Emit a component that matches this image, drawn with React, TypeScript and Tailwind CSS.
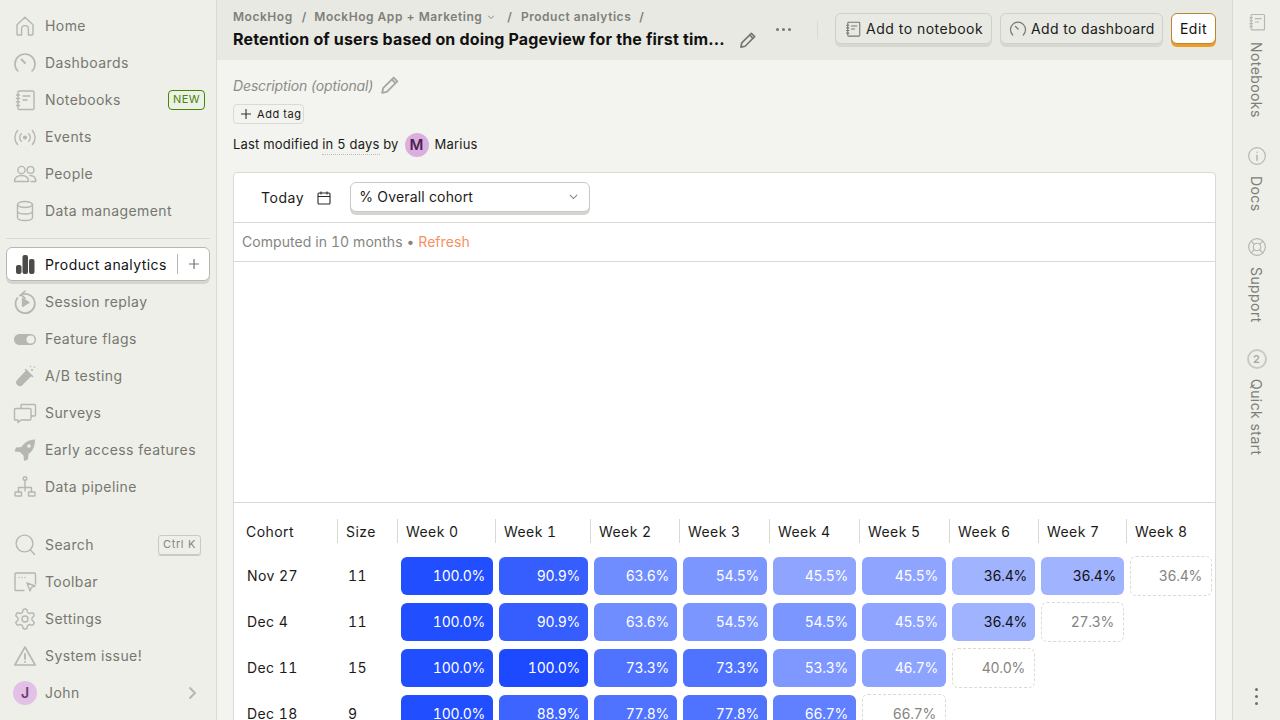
import React from "react";

type IconProps = { className?: string };
const S = ({ children, className = "w-6 h-6 text-[#b6b7b0]" }: { children: React.ReactNode; className?: string }) => (
  <svg viewBox="0 0 24 24" fill="none" stroke="currentColor" strokeWidth={1.4} strokeLinecap="round" strokeLinejoin="round" className={className}>
    {children}
  </svg>
);

const HomeI = (p: IconProps) => <S {...p}><path d="M4 10.8 12 3.200l8 7.600v9.200a1 1 0 0 1-1 1h-3.600v-6a3.400 3.400 0 0 0-6.800 0v6H5a1 1 0 0 1-1-1z" /></S>;
const GaugeI = (p: IconProps) => <S {...p}><path d="M4.900 20a10 10 0 1 1 14.200 0" strokeWidth={1.6} /><path d="M8.500 8.500l3.500 3.500" strokeWidth={1.8} /></S>;
const NotebookI = (p: IconProps) => <S {...p}><rect x="5" y="3" width="16" height="18.500" rx="1.200" /><path d="M10 8h7M10 12h4M3.500 7h3M3.500 10.500h3M3.500 14h3M3.500 17.500h3" /></S>;
const EventsI = (p: IconProps) => <S {...p}><circle cx="12" cy="12.500" r="1.400" fill="currentColor" /><path d="M8.300 8.800a5.200 5.200 0 0 0 0 7.400M15.700 8.800a5.200 5.200 0 0 1 0 7.400M4.600 5.500a10.500 10.500 0 0 0 0 14M19.400 5.500a10.500 10.500 0 0 1 0 14" /></S>;
const PeopleI = (p: IconProps) => <S {...p}><circle cx="8.500" cy="8" r="3.600" /><circle cx="17.500" cy="8" r="3.400" /><path d="M1.500 19.500c0-4.200 2.800-6 7-6s7 1.800 7 6zM17 13.500c3.600 0 5.800 2 5.800 6H18" /></S>;
const DbI = (p: IconProps) => <S {...p}><ellipse cx="12" cy="5.500" rx="7.500" ry="3" /><path d="M4.500 5.500v13c0 1.700 3.400 3 7.500 3s7.500-1.300 7.500-3v-13M4.500 12c0 1.700 3.400 3 7.500 3s7.500-1.300 7.500-3" /></S>;
const BarsI = () => (
  <svg viewBox="0 0 24 24" className="w-6 h-6 text-[#4b4b47]" fill="currentColor">
    <rect x="3" y="13" width="5.500" height="9" rx="2" /><rect x="9.500" y="3" width="5.500" height="19" rx="2" /><rect x="16" y="7" width="5.500" height="15" rx="2" />
  </svg>
);
const ReplayI = (p: IconProps) => <S {...p}><path d="M7 5.500a9.600 9.600 0 1 1-2.700 2.600" strokeWidth={1.8} /><path d="M12 1 8 4.800l4 3.400" strokeWidth={1.600} /><path d="M9.600 8.600v7.800l6.400-3.900z" fill="currentColor" /></S>;
const ToggleI = () => (
  <svg viewBox="0 0 24 24" className="w-6 h-6 text-[#b6b7b0]"><rect x="1" y="7" width="22" height="11" rx="5.500" fill="currentColor" /><circle cx="17.500" cy="12.500" r="4" fill="#eeefe9" /></svg>
);
const TubeI = () => (
  <svg viewBox="0 0 24 24" className="w-6 h-6 text-[#b6b7b0]" fill="currentColor">
    <path d="M13.500 6 19 11.500 9.500 21a3.600 3.600 0 0 1-5.200-5.200z" /><path d="M12.500 5.500l7 7" stroke="currentColor" strokeWidth="1.600" strokeLinecap="round" /><circle cx="19" cy="6" r="1.100" /><circle cx="17.500" cy="2.500" r=".8" /><circle cx="21.500" cy="3" r=".8" />
  </svg>
);
const SurveyI = (p: IconProps) => <S {...p}><path d="M8 7.500v-3a1 1 0 0 1 1-1h12.500a1 1 0 0 1 1 1V14a1 1 0 0 1-1 1H18" /><path d="M2.500 7.500H17a1 1 0 0 1 1 1V18a1 1 0 0 1-1 1H8l-3 2.500V19H2.500a1 1 0 0 1-1-1V8.500a1 1 0 0 1 1-1z" /></S>;
const RocketI = () => (
  <svg viewBox="0 0 24 24" className="w-6 h-6 text-[#b6b7b0]" fill="currentColor">
    <path d="M22 1.500c-6.500.4-10.500 2.800-13.500 7.500L3 9.500 1.500 13.500 7 14l3.500 3.500.5 5.500 4-1.500.5-5.500C20 13 22 8.500 22 1.500z" />
    <circle cx="16" cy="8" r="1.800" fill="#eeefe9" />
  </svg>
);
const PipelineI = (p: IconProps) => <S {...p}><circle cx="12" cy="3.500" r="1.800" /><path d="M12 5.500V16M5.500 17v-4.500h13V17" /><rect x="2" y="17" width="6.500" height="4" rx=".6" /><rect x="15.500" y="17" width="6.500" height="4" rx=".6" /></S>;
const SearchI = (p: IconProps) => <S {...p}><circle cx="11.500" cy="10.500" r="8.400" /><path d="m17.500 17 4 4.500" /></S>;
const ToolbarI = (p: IconProps) => <S {...p}><path d="M11 20.500H3a1 1 0 0 1-1-1V4a1 1 0 0 1 1-1h18.500a1 1 0 0 1 1 1v10" /><path d="M6 7.500h.01M9 7.500h.01M12 7.500h.01" /><path d="M14 13l8 3-3.500 1.300-1.500 3.700z" /></S>;
const GearI = (p: IconProps) => (
  <S {...p}><path d="M12.220 2h-.44a2 2 0 0 0-2 2v.18a2 2 0 0 1-1 1.730l-.43.25a2 2 0 0 1-2 0l-.15-.08a2 2 0 0 0-2.730.73l-.22.38a2 2 0 0 0 .73 2.730l.15.100a2 2 0 0 1 1 1.720v.510a2 2 0 0 1-1 1.740l-.15.090a2 2 0 0 0-.73 2.730l.22.380a2 2 0 0 0 2.730.730l.15-.080a2 2 0 0 1 2 0l.43.250a2 2 0 0 1 1 1.730V20a2 2 0 0 0 2 2h.44a2 2 0 0 0 2-2v-.180a2 2 0 0 1 1-1.730l.43-.250a2 2 0 0 1 2 0l.15.080a2 2 0 0 0 2.730-.730l.22-.390a2 2 0 0 0-.73-2.730l-.15-.080a2 2 0 0 1-1-1.740v-.500a2 2 0 0 1 1-1.740l.15-.090a2 2 0 0 0 .73-2.730l-.22-.380a2 2 0 0 0-2.730-.730l-.15.080a2 2 0 0 1-2 0l-.43-.250a2 2 0 0 1-1-1.730V4a2 2 0 0 0-2-2z" /><circle cx="12" cy="12" r="3" /></S>
);
const WarnI = (p: IconProps) => <S {...p}><path d="M12 3 1.800 21h20.400z" strokeWidth={1.6} /><path d="M12 10v5M12 17.800v.2" strokeWidth={1.8} /></S>;
const Pencil = ({ className }: IconProps) => (
  <svg viewBox="0 0 24 24" fill="none" stroke="currentColor" strokeWidth={2} strokeLinejoin="round" className={className}>
    <path d="M3.500 20.500l1-5L16 4l4 4L8.500 19.500z" /><path d="M14 6l4 4" />
  </svg>
);
const CalendarI = () => (
  <svg viewBox="0 0 16 16" fill="none" stroke="#2a2a28" strokeWidth={1.1} className="w-4 h-4">
    <rect x="2" y="3" width="12" height="11" rx="1" /><path d="M2 6.500h12M5 1.500v3M11 1.500v3" />
  </svg>
);

const Nav = ({ icon, label, right }: { icon: React.ReactNode; label: string; right?: React.ReactNode }) => (
  <div className="flex items-center h-[37px] pl-[7px] pr-[5px]">
    <span className="w-6 h-6 shrink-0">{icon}</span>
    <span className="ml-2 flex-1 text-[14px] font-normal text-[#767771] tracking-[0.03em] whitespace-nowrap">{label}</span>
    {right}
  </div>
);

const Sidebar = () => (
  <aside className="w-[217px] shrink-0 h-full bg-[#eeefe9] border-r border-[#d9dad3] px-[6px] pt-[7px] flex flex-col">
    <Nav icon={<HomeI />} label="Home" />
    <Nav icon={<GaugeI />} label="Dashboards" />
    <Nav icon={<NotebookI />} label="Notebooks" right={
      <span className="h-5 px-1 flex items-center rounded-[4px] border border-[#3f8a00] text-[#3f8a00] text-[11px] font-normal tracking-[0.04em]">NEW</span>
    } />
    <Nav icon={<EventsI />} label="Events" />
    <Nav icon={<PeopleI />} label="People" />
    <Nav icon={<DbI />} label="Data management" />
    <div className="h-px bg-[#d9dad3] mt-[9px] mb-[7px]" />
    <div className="h-[37px] shrink-0">
      <div className="h-[34px] mt-px bg-white rounded-[6px] border border-[#b7b8b1] shadow-[0_3px_0_#d4d5ce] flex items-center pl-[6px]">
        <BarsI />
        <span className="ml-2 text-[14px] font-normal text-[#111] tracking-[0.03em] whitespace-nowrap">Product analytics</span>
        <span className="ml-[10px] h-5 w-px bg-[#b7b8b1]" />
        <svg viewBox="0 0 16 16" className="w-4 h-4 ml-2 text-[#77776f]" stroke="currentColor" strokeWidth="1.200"><path d="M8 3v10M3 8h10" /></svg>
      </div>
    </div>
    <Nav icon={<ReplayI />} label="Session replay" />
    <Nav icon={<ToggleI />} label="Feature flags" />
    <Nav icon={<TubeI />} label="A/B testing" />
    <Nav icon={<SurveyI />} label="Surveys" />
    <Nav icon={<RocketI />} label="Early access features" />
    <Nav icon={<PipelineI />} label="Data pipeline" />
    <div className="h-[21px] shrink-0" />
    <Nav icon={<SearchI />} label="Search" right={
      <span className="h-5 px-1 mr-[4px] flex items-center rounded-[3px] border border-[#c9cac3] shadow-[0_1px_0_#c9cac3] text-[#85867f] text-[11px] font-normal tracking-[0.06em]">Ctrl K</span>
    } />
    <Nav icon={<ToolbarI />} label="Toolbar" />
    <Nav icon={<GearI />} label="Settings" />
    <Nav icon={<WarnI />} label="System issue!" />
    <Nav icon={<span className="w-6 h-6 rounded-full bg-[#e3c0e6] flex items-center justify-center text-[#6b3a70] text-[14px] font-semibold">J</span>} label="John" right={
      <svg viewBox="0 0 16 16" fill="none" stroke="#b6b7b0" strokeWidth="2" className="w-4 h-4 mr-[5px]"><path d="M5.500 2.500 11 8l-5.500 5.500" /></svg>
    } />
  </aside>
);

const Crumb = ({ children, className = "" }: { children: React.ReactNode; className?: string }) => (
  <span className={`text-[12px] font-semibold text-[#7f7f79] tracking-[0.045em] whitespace-nowrap ${className}`}>{children}</span>
);
const Slash = ({ className = "" }: { className?: string }) => <span className={`text-[12px] font-semibold text-[#7f7f79] ${className}`}>/</span>;

const HeaderBtn = ({ icon, label, w, t }: { icon: React.ReactNode; label: string; w: string; t: string }) => (
  <div className={`h-[31px] pl-[8px] flex items-center gap-[4px] rounded-[6px] border border-[#cfd0c9] shadow-[0_3px_0_#d6d7d0] text-[14px] font-normal text-[#1b1b19] whitespace-nowrap ${w} ${t}`}>
    {icon}{label}
  </div>
);

const Header = () => (
  <header className="h-[60px] shrink-0 bg-[#e8e9e3] pl-4 pr-4 flex items-start">
    <div className="w-[492px] shrink-0 pt-[10px]">
      <div className="flex items-center h-[14px]">
        <Crumb>MockHog</Crumb><Slash className="ml-[9px]" />
        <Crumb className="ml-2">MockHog App + Marketing</Crumb>
        <svg viewBox="0 0 16 16" fill="none" stroke="#7f7f79" strokeWidth="1.500" className="w-[10px] h-[10px] ml-1"><path d="M3.500 6 8 10.500 12.500 6" /></svg>
        <Slash className="ml-[11px]" />
        <Crumb className="ml-[9px]">Product analytics</Crumb><Slash className="ml-[8px]" />
      </div>
      <div className="mt-[4px] text-[16px] leading-[22px] font-bold text-[#111110] tracking-[0.01em] whitespace-nowrap">Retention of users based on doing Pageview for the first tim...</div>
    </div>
    <Pencil className="w-5 h-5 mt-[30px] ml-[13px] text-[#77776f] shrink-0" />
    <div className="mt-[28px] ml-[18px] flex gap-[3px] shrink-0">
      <span className="w-[3px] h-[3px] rounded-full bg-[#77776f]" /><span className="w-[3px] h-[3px] rounded-full bg-[#77776f]" /><span className="w-[3px] h-[3px] rounded-full bg-[#77776f]" />
    </div>
    <div className="w-px h-[18px] bg-[#d9dad3] mt-[21px] ml-[26px] shrink-0" />
    <div className="ml-auto flex gap-2 mt-[13px] shrink-0">
      <HeaderBtn w="w-[157px]" t="tracking-[0.035em]" label="Add to notebook" icon={<NotebookI className="w-[18px] h-[18px] text-[#77776f]" />} />
      <HeaderBtn w="w-[163px]" t="tracking-[0.025em]" label="Add to dashboard" icon={<GaugeI className="w-[18px] h-[18px] text-[#77776f]" />} />
      <div className="h-[31px] w-[45px] justify-center flex items-center rounded-[6px] bg-white border border-[#b8862e] shadow-[0_3px_0_#eb9d2a] text-[14px] font-normal text-[#111] tracking-[0.04em]">Edit</div>
    </div>
  </header>
);

type Cell = { v: string; o?: number; dark?: boolean; dash?: boolean };
const c = (v: string, o: number, dark = false): Cell => ({ v, o, dark });
const d = (v: string): Cell => ({ v, dash: true });
const rows: { name: string; size: string; cells: Cell[] }[] = [
  { name: "Nov 27", size: "11", cells: [c("100.0%", 0.98), c("90.9%", 0.89), c("63.6%", 0.63), c("54.5%", 0.58), c("45.5%", 0.5), c("45.5%", 0.5), c("36.4%", 0.42, true), c("36.4%", 0.42, true), d("36.4%")] },
  { name: "Dec 4", size: "11", cells: [c("100.0%", 0.98), c("90.9%", 0.89), c("63.6%", 0.63), c("54.5%", 0.58), c("54.5%", 0.58), c("45.5%", 0.5), c("36.4%", 0.42, true), d("27.3%")] },
  { name: "Dec 11", size: "15", cells: [c("100.0%", 0.98), c("100.0%", 1), c("73.3%", 0.78), c("73.3%", 0.78), c("53.3%", 0.57), c("46.7%", 0.51), d("40.0%")] },
  { name: "Dec 18", size: "9", cells: [c("100.0%", 0.98), c("88.9%", 0.86), c("77.8%", 0.78), c("77.8%", 0.78), c("66.7%", 0.7), d("66.7%")] },
];
const weeks = ["Week 0", "Week 1", "Week 2", "Week 3", "Week 4", "Week 5", "Week 6", "Week 7", "Week 8"];
const gridCols = "grid grid-cols-[103px_60px_98px_95px_89px_90px_90px_90px_89px_88px_89px]";
const cellPad = ["pl-1 pr-0.5", "pl-1 pr-0.5", "pl-1 pr-0.5", "pl-1 pr-0.5", "pl-1 pr-[3px]", "pl-[3px] pr-[3px]", "pl-[3px] pr-[3px]", "pl-[3px] pr-0.5", "pl-1 pr-[3px]"];

const Table = () => (
  <div className="pt-4 text-[14px] font-normal tracking-[0.03em] tabular-nums text-[#1b1b19]">
    <div className={`${gridCols} h-[24px] mb-[14px] items-center`}>
      <div className="pl-3">Cohort</div>
      {["Size", ...weeks].map((w) => (
        <div key={w} className="h-[24px] pl-2 border-l border-[#d9dad3] flex items-center whitespace-nowrap">{w}</div>
      ))}
    </div>
    {rows.map((r) => (
      <div key={r.name} className={`${gridCols} h-[38px] mb-2 items-center`}>
        <div className="pl-[13px] pb-0.5">{r.name}</div>
        <div className="pl-[11px] pb-0.5">{r.size}</div>
        {r.cells.map((x, i) => (
          <div key={i} className={`${cellPad[i]} tracking-[-0.02em]`}>
            {x.dash ? (
              <div className="h-[40px] -my-px pb-0.5 rounded-[6px] border border-dashed border-[#d9dad3] flex items-center justify-end pr-[9px] text-[#85857f]">{x.v}</div>
            ) : (
              <div
                className={`h-[38px] pb-0.5 rounded-[6px] flex items-center justify-end pr-2 ${x.dark ? "text-[#111]" : "text-white"}`}
                style={{ backgroundColor: `rgba(29,74,255,${x.o})` }}
              >
                {x.v}
              </div>
            )}
          </div>
        ))}
      </div>
    ))}
  </div>
);

const Content = () => (
  <div className="flex-1 min-h-0 overflow-hidden bg-[#f3f4ef] px-4 pt-[14px]">
    <div className="h-[22px] flex items-center text-[14px] italic text-[#8c8d87] tracking-[-0.01em]">
      Description (optional)
      <Pencil className="w-[22px] h-[22px] ml-[6px] text-[#a6a7a0]" />
    </div>
    <div className="mt-2 h-5 w-[71px] flex items-center gap-[5px] pl-[6px] rounded-[4px] border border-[#d9dad3] text-[11px] font-normal tracking-[0.05em] text-[#1b1b19] whitespace-nowrap">
      <svg viewBox="0 0 12 12" className="w-[12px] h-[12px] shrink-0" stroke="#333" strokeWidth="1.100"><path d="M6 1v10M1 6h10" /></svg>
      Add tag
    </div>
    <div className="mt-[9px] h-6 flex items-center text-[13px] font-normal text-[#1b1b19] tracking-[0.015em] tabular-nums whitespace-nowrap">
      Last modified&nbsp;<span className="border-b border-dotted border-[#bdbdb7]">in 5 days</span>&nbsp;by
      <span className="ml-[6px] w-6 h-6 rounded-full bg-[#dcaedf] flex items-center justify-center text-[15px] font-semibold text-[#4a2350]">M</span>
      <span className="ml-[6px]">Marius</span>
    </div>
    <div className="mt-[15px] bg-white border border-[#d9dad3] rounded-[4px] h-[700px]">
      <div className="h-[50px] flex items-center border-b border-[#d9dad3]">
        <span className="ml-[27px] text-[14px] font-normal text-[#1b1b19] tracking-[0.04em]">Today</span>
        <span className="ml-[12px]"><CalendarI /></span>
        <div className="ml-[18px] w-[240px] h-[30px] mb-0.5 pl-[8px] pr-[9px] flex items-center justify-between bg-white rounded-[6px] border border-[#c9cac3] shadow-[0_3px_0_#d4d5ce] text-[14px] font-normal text-[#1b1b19] tracking-[0.012em]">
          % Overall cohort
          <svg viewBox="0 0 16 16" fill="none" stroke="#85857f" strokeWidth="1.300" className="w-[13px] h-[13px]"><path d="M3.500 6 8 10.500 12.500 6" /></svg>
        </div>
      </div>
      <div className="h-[39px] pb-0.5 flex items-center border-b border-[#d9dad3] pl-2 text-[14px] text-[#85857f] tracking-[0.005em] tabular-nums">
        Computed in 10 months&nbsp;•&nbsp;<span className="text-[#f98f5f]">Refresh</span>
      </div>
      <div className="h-[241px] border-b border-[#d9dad3]" />
      <Table />
    </div>
  </div>
);

const SideItem = ({ icon, label, pb = "pb-[26px]" }: { icon: React.ReactNode; label: string; pb?: string }) => (
  <div className={`flex flex-col items-center ${pb}`}>
    <span className="w-5 h-5 mb-[10px]">{icon}</span>
    <span className="text-[14px] font-normal text-[#7d7e78] tracking-[0.03em] whitespace-nowrap [writing-mode:vertical-rl]">{label}</span>
  </div>
);

const Right = () => {
  const cls = "w-5 h-5 text-[#b6b7b0]";
  return (
    <aside className="w-[48px] shrink-0 h-full bg-[#eeefe9] border-l border-[#d9dad3] flex flex-col items-center pt-[12px]">
      <SideItem pb="pb-[28px]" label="Notebooks" icon={<NotebookI className={cls} />} />
      <SideItem label="Docs" icon={<S className={cls}><circle cx="12" cy="12" r="10" /><path d="M12 11v6M12 7.500v.1" strokeWidth={1.8} /></S>} />
      <SideItem label="Support" icon={<S className={cls}><circle cx="12" cy="12" r="10" /><circle cx="12" cy="12" r="4.500" /><path d="M5 5l4 4M19 5l-4 4M5 19l4-4M19 19l-4-4" /></S>} />
      <SideItem label="Quick start" icon={<span className="w-5 h-5 rounded-full border-2 border-[#c9cac3] flex items-center justify-center text-[11px] font-semibold text-[#a6a7a0]">2</span>} />
      <div className="mt-auto mb-[15px] flex flex-col gap-[4px]">
        <span className="w-[3px] h-[3px] rounded-full bg-[#6f6f69]" /><span className="w-[3px] h-[3px] rounded-full bg-[#6f6f69]" /><span className="w-[3px] h-[3px] rounded-full bg-[#6f6f69]" />
      </div>
    </aside>
  );
};

export default function App() {
  return (
    <div className="flex w-[1280px] h-[720px] overflow-hidden font-['Inter','Liberation_Sans',sans-serif]">
      <Sidebar />
      <main className="flex-1 min-w-0 flex flex-col h-full">
        <Header />
        <Content />
      </main>
      <Right />
    </div>
  );
}
